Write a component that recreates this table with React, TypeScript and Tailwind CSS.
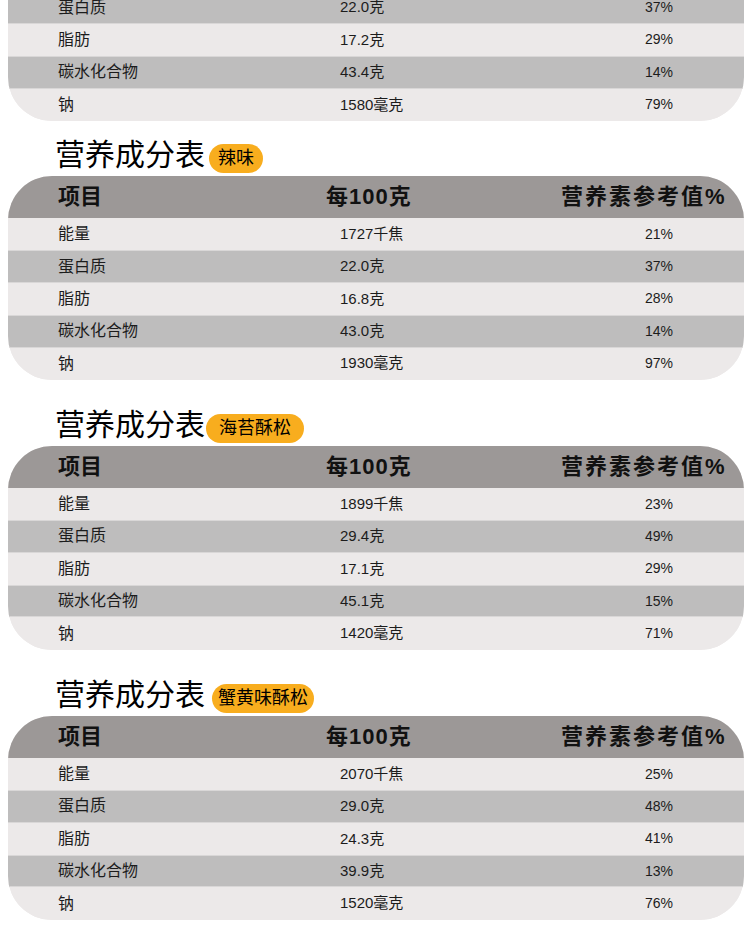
import React from "react";

type Row = { name: string; value: string; pct: string };
type Table = { badge?: string; rows: Row[]; gapTop: string; badgeCls: string };

const FONT = '"Liberation Sans", "Noto Sans CJK SC", sans-serif';

const tables: Table[] = [
  {
    gapTop: "mt-0",
    badgeCls: "px-2",
    rows: [
      { name: "能量", value: "1740千焦", pct: "21%" },
      { name: "蛋白质", value: "22.0克", pct: "37%" },
      { name: "脂肪", value: "17.2克", pct: "29%" },
      { name: "碳水化合物", value: "43.4克", pct: "14%" },
      { name: "钠", value: "1580毫克", pct: "79%" },
    ],
  },
  {
    badge: "辣味",
    gapTop: "mt-[16px]",
    badgeCls: "ml-[4px] px-[9px]",
    rows: [
      { name: "能量", value: "1727千焦", pct: "21%" },
      { name: "蛋白质", value: "22.0克", pct: "37%" },
      { name: "脂肪", value: "16.8克", pct: "28%" },
      { name: "碳水化合物", value: "43.0克", pct: "14%" },
      { name: "钠", value: "1930毫克", pct: "97%" },
    ],
  },
  {
    badge: "海苔酥松",
    gapTop: "mt-[27px]",
    badgeCls: "ml-[1px] px-[13px]",
    rows: [
      { name: "能量", value: "1899千焦", pct: "23%" },
      { name: "蛋白质", value: "29.4克", pct: "49%" },
      { name: "脂肪", value: "17.1克", pct: "29%" },
      { name: "碳水化合物", value: "45.1克", pct: "15%" },
      { name: "钠", value: "1420毫克", pct: "71%" },
    ],
  },
  {
    badge: "蟹黄味酥松",
    gapTop: "mt-[27px]",
    badgeCls: "ml-[7px] px-[6px]",
    rows: [
      { name: "能量", value: "2070千焦", pct: "25%" },
      { name: "蛋白质", value: "29.0克", pct: "48%" },
      { name: "脂肪", value: "24.3克", pct: "41%" },
      { name: "碳水化合物", value: "39.9克", pct: "13%" },
      { name: "钠", value: "1520毫克", pct: "76%" },
    ],
  },
];

function NutritionTable({ t }: { t: Table }) {
  return (
    <section className={t.gapTop}>
      {t.badge && (
        <div className="flex items-end pl-[55px] mb-[3px] h-[36px]">
          <span className="text-[30px] leading-[36px] text-black font-normal">营养成分表</span>
          <span
            className={`h-[29px] ${t.badgeCls} rounded-full bg-[#f8ad1e] text-[18px] leading-[29px] text-black font-normal`}
          >
            {t.badge}
          </span>
        </div>
      )}
      <div className="ml-[8px] w-[736px] rounded-[44px] overflow-hidden bg-[#ece9e9]">
        <div className="flex items-center h-[42px] bg-[#9c9897] text-[#111] text-[22px] font-bold">
          <div className="w-[318px] pl-[50px]">项目</div>
          <div className="w-[235px] tracking-[1px]">每100克</div>
          <div className="flex-1 tracking-[2px]">营养素参考值%</div>
        </div>
        {t.rows.map((r, i) => (
          <div
            key={r.name}
            className={`flex items-center h-[32.4px] text-[#1c1c1c] ${
              i % 2 === 1 ? "bg-[#bebdbd] border-t border-b border-[#d9d7d7]" : "bg-[#ece9e9]"
            }`}
          >
            <div className="w-[318px] pl-[50px] text-[16px]">{r.name}</div>
            <div className="w-[235px] pl-[14px] text-[15px]">{r.value}</div>
            <div className="flex-1 pl-[84px] text-[14px]">{r.pct}</div>
          </div>
        ))}
      </div>
    </section>
  );
}

export default function App() {
  return (
    <div className="w-[750px] h-[946px] overflow-hidden bg-white" style={{ fontFamily: FONT }}>
      <div className="-mt-[83px]">
        {tables.map((t, i) => (
          <NutritionTable key={i} t={t} />
        ))}
      </div>
    </div>
  );
}
